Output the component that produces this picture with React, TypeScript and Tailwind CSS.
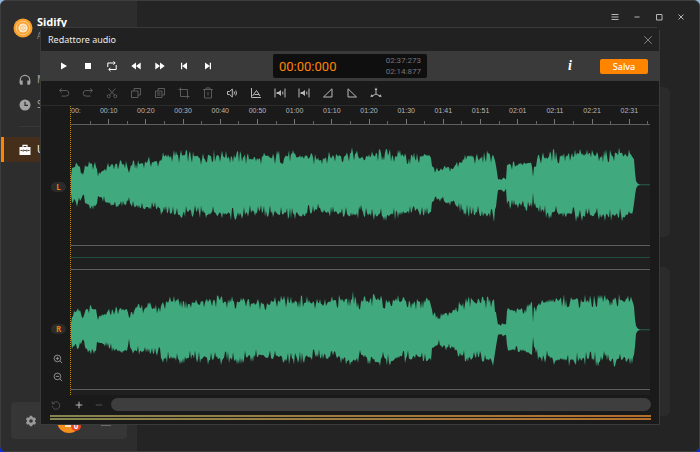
import React from "react";
import type { ReactNode } from "react";

type Key = [number, number];

const LENGTH = 579;

/* Loudness envelope of the track: position, height above the centre line */
const envelope: Key[] = [
  [0, 10], [1, 18], [5, 22], [9, 19], [12, 11], [14, 21], [20, 23], [25, 22], [27, 12], [31, 15],
  [37, 20], [46, 23], [56, 23], [58, 13], [60, 22], [68, 24], [78, 26], [88, 24], [91, 30], [100, 31],
  [106, 33], [112, 32], [125, 30], [138, 32], [150, 32], [170, 32], [185, 29], [205, 31], [230, 32],
  [248, 28], [262, 31], [282, 35], [290, 30], [305, 33], [320, 33], [335, 32], [345, 29], [357, 34],
  [360, 32], [361, 20], [368, 15], [375, 19], [383, 19], [385, 24], [391, 28], [400, 32], [408, 29],
  [423, 34], [425, 20], [427, 6], [430, 5], [433, 8], [435, 5], [436, 22], [450, 23], [461, 25],
  [462, 8], [463, 24], [470, 30], [480, 32], [505, 34], [530, 33], [550, 34], [561, 31], [563, 27],
  [565, 4], [567, 1], [569, 0],
];

function level(x: number): number {
  for (let i = 1; i < envelope.length; i++) {
    const [x0, y0] = envelope[i - 1];
    const [x1, y1] = envelope[i];
    if (x <= x1) return y0 + ((x - x0) / (x1 - x0)) * (y1 - y0);
  }
  return 0;
}

function noise(n: number, seed: number): number {
  const v = Math.sin(n * 12.9898 + seed * 78.233) * 43758.5453;
  return v - Math.floor(v);
}

function edge(seed: number, sign: number): string[] {
  const points: string[] = [];
  for (let x = 0; x <= 569; x++) {
    const fine = noise(x, seed);
    const wide = noise(Math.floor(x / 5), seed + 7);
    const spike = fine > 0.88 ? 0.08 : 0;
    const dip = fine < 0.16 ? 0.12 : 0;
    const factor = 0.76 + wide * 0.08 + fine * 0.2 + spike - dip;
    points.push(`${x},${(60 + sign * level(x) * factor).toFixed(1)}`);
  }
  return points;
}

function Wave({ seed, label }: { seed: number; label: string }) {
  const points = [...edge(seed, -1), ...edge(seed + 3, 1).reverse()].join(" ");
  return (
    <svg
      role="img"
      aria-label={label}
      viewBox={`0 0 ${LENGTH} 120`}
      preserveAspectRatio="none"
      className="block h-full w-full"
    >
      <path d="M560 60H579" stroke="#24604a" strokeWidth="1" />
      <polygon points={points} fill="#41a97e" />
    </svg>
  );
}

function Icon({ children, size = "size-3", width = 1 }: { children: ReactNode; size?: string; width?: number }) {
  return (
    <svg
      viewBox="0 0 12 12"
      fill="none"
      stroke="currentColor"
      strokeWidth={width}
      className={`${size} shrink-0`}
      aria-hidden="true"
    >
      {children}
    </svg>
  );
}

type Tool = { name: string; icon: ReactNode; off?: boolean };

const solid = { fill: "currentColor", stroke: "none" };

const mute = (
  <>
    <path d="M1 1.5v9M11 1.5v9M8.800 4.500v3" />
    <path {...solid} d="M2.600 5h1.800L7 3v6L4.400 7H2.600Z" />
  </>
);

const transport: Tool[] = [
  { name: "Riproduci", icon: <path {...solid} d="M3 2.5 9 6 3 9.5Z" /> },
  { name: "Ferma", icon: <path {...solid} d="M3 3h6v6H3Z" /> },
  { name: "Ripeti", icon: <path d="M1.800 7V3H9M10.200 5v4.500H3M7.500 1.300 9.200 3 7.500 4.700M4.500 7.800 2.800 9.500l1.700 1.700" /> },
  { name: "Indietro", icon: <path {...solid} d="M6 2.500v7L1.300 6ZM10.700 2.500v7L6 6Z" /> },
  { name: "Avanti", icon: <path {...solid} d="M6 2.500v7L10.700 6ZM1.300 2.500v7L6 6Z" /> },
  { name: "Inizio", icon: <path {...solid} d="M3 2.800h1.200v6.400H3ZM9 2.500v7L4.200 6Z" /> },
  { name: "Fine", icon: <path {...solid} d="M7.800 2.800H9v6.400H7.800ZM3 2.500v7L7.800 6Z" /> },
];

const editing: Tool[] = [
  { name: "Annulla", off: true, icon: <path d="M3.8 1.5 1.5 3.5l2.3 2M1.8 3.5H8a2.7 2.7 0 0 1 0 5.6H3.5" /> },
  { name: "Ripristina", off: true, icon: <path d="m8.2 1.5 2.3 2-2.3 2M10.2 3.5H4a2.7 2.7 0 0 0 0 5.6h4.5" /> },
  {
    name: "Taglia",
    off: true,
    icon: (
      <>
        <path d="m2.5 1.5 6 6.6M9.5 1.5l-6 6.6" />
        <circle cx="2.7" cy="9.2" r="1.5" />
        <circle cx="9.3" cy="9.2" r="1.5" />
      </>
    ),
  },
  { name: "Copia", off: true, icon: <path d="M4 4V1.5h6.5V8H8M1.5 4H8v6.5H1.5Z" /> },
  { name: "Incolla", off: true, icon: <path d="M4 4V1.5h6.5V8H8M1.5 4H8v6.5H1.5ZM3 6h3.5M3 8h3.5" /> },
  { name: "Ritaglia", off: true, icon: <path d="M2.500.5v9h9M.5 2.500h9v9" /> },
  { name: "Elimina", off: true, icon: <path d="M1 2.500h10M4 2.500V1h4v1.500M2.500 2.500v8.500h7V2.500M6 5v3.500" /> },
  { name: "Volume", icon: <path d="M1.500 4.500H3.500L6.300 2v8L3.500 7.500h-2ZM8 4.500q1 1.500 0 3M9.700 3.500q1.600 2.500 0 5" /> },
  { name: "Inviluppo", icon: <path d="M1.500 1v9.500H11M2.500 9 6.500 3.500 10 9M4.500 7.500h4.500" /> },
  { name: "Silenzia", icon: mute },
  { name: "Inserisci silenzio", icon: mute },
  { name: "Dissolvenza in entrata", icon: <path d="M1.500 10 10 1.800V10Z" /> },
  { name: "Dissolvenza in uscita", icon: <path d="M10.500 10 2 1.800V10Z" /> },
  {
    name: "Dividi",
    icon: (
      <>
        <path d="M6 2v5L2 9M6 7l4 2" />
        <path {...solid} d="M6 .5 7.500 3h-3ZM.3 9.800l1.200-2.600L3.300 10ZM11.700 9.800l-1.200-2.600L8.700 10Z" />
      </>
    ),
  },
];

const times = [
  "00:10", "00:20", "00:30", "00:40", "00:50", "01:00", "01:10", "01:20",
  "01:30", "01:41", "01:51", "02:01", "02:11", "02:21", "02:31",
];

function ToolButton({ tool }: { tool: Tool }) {
  return (
    <button
      type="button"
      aria-label={tool.name}
      disabled={tool.off}
      className="flex h-6 w-6 items-center justify-center disabled:text-[#5a5a5a]"
    >
      <Icon>{tool.icon}</Icon>
    </button>
  );
}

function Channel({ name }: { name: string }) {
  return (
    <span className="flex h-2.5 w-[15px] items-center justify-center rounded-full bg-[#2b2b2b] text-[8px] leading-none font-bold text-[#f07c05]">
      {name}
    </span>
  );
}

function Zoom({ name, plus }: { name: string; plus?: boolean }) {
  return (
    <button type="button" aria-label={name} className="flex h-[18px] w-4 items-center justify-center text-[#a0a0a0]">
      <Icon size="size-2.5">
        <circle cx="5.300" cy="5.300" r="4" />
        <path d={plus ? "M8.300 8.300 11 11M3.300 5.300h4M5.300 3.300v4" : "M8.300 8.300 11 11M3.300 5.300h4"} />
      </Icon>
    </button>
  );
}

function Sidebar() {
  const item = "flex h-[25px] items-center gap-1.5 border-l-3 pl-[15px] text-[10px]";
  return (
    <aside className="flex w-[136px] shrink-0 flex-col bg-[#2d2d2d] text-[#a3a3a3]">
      <div className="flex h-[66px] gap-1 pt-[13px] pl-3">
        <svg viewBox="0 0 20 20" className="mt-1 size-5" role="img" aria-label="Logo Sidify">
          <circle cx="10" cy="10" r="9.500" fill="#f9a02f" />
          <circle cx="10" cy="10" r="6.800" fill="none" stroke="#ffd08a" strokeWidth=".9" />
          <circle cx="10" cy="10" r="4.600" fill="#ffe9c9" />
          <circle cx="10" cy="10" r="2.800" fill="#fbc27a" />
          <path d="M8.500 9v2M10 8v4M11.500 9v2" stroke="#fff" strokeWidth=".7" />
        </svg>
        <div>
          <div className="text-[11px] leading-4 font-bold text-white">Sidify</div>
          <div className="text-[8px] leading-3 text-[#888]">A</div>
        </div>
      </div>
      <nav className="flex flex-col">
        <a href="#m" className={`${item} border-transparent`}>
          <svg viewBox="0 0 12 12" className="size-3" fill="none" aria-hidden="true">
            <path d="M1.300 9V6a4.700 4.700 0 0 1 9.400 0v3" stroke="currentColor" strokeWidth="1.200" />
            <path d="M.7 6.500h3v4.300H2A1.300 1.300 0 0 1 .7 9.500ZM11.300 6.500h-3v4.300H10a1.300 1.300 0 0 0 1.300-1.300Z" fill="currentColor" />
          </svg>
          M
        </a>
        <a href="#s" className={`${item} border-transparent`}>
          <svg viewBox="0 0 12 12" className="size-3" aria-hidden="true">
            <circle cx="6" cy="6" r="5.500" fill="currentColor" />
            <path d="M6 2.800v3.500h3" fill="none" stroke="#2d2d2d" strokeWidth="1.200" />
          </svg>
          S
        </a>
        <hr className="mx-[18px] mt-[9px] mb-2.5 border-[#383838]" />
        <a href="#u" aria-current="page" className={`${item} border-[#ff8400] bg-[#452f1a] text-white`}>
          <svg viewBox="0 0 12 12" className="size-3" aria-hidden="true">
            <path d="M4 3V1.300h4V3" fill="none" stroke="currentColor" strokeWidth="1.200" />
            <path d="M.5 3h11v8H.5Z" fill="currentColor" />
            <path d="M1.500 6.500h2M5 6.500h2M8.500 6.500h2M4.200 5.500v2.200M7.800 5.500v2.200" stroke="#452f1a" strokeWidth=".9" />
          </svg>
          U
        </a>
      </nav>
      <div className="mx-2.5 mt-auto mb-3 flex h-[37px] items-center rounded-sm bg-[#363636] pl-3.5">
        <button type="button" aria-label="Impostazioni" className="size-3 text-[#9a9a9a]">
          <svg viewBox="0 0 12 12" className="size-3" aria-hidden="true">
            <path d="M6 .8v10.400M1.500 3.400l9 5.200M10.500 3.400l-9 5.200" stroke="currentColor" strokeWidth="2.600" />
            <circle cx="6" cy="6" r="4.200" fill="currentColor" />
            <circle cx="6" cy="6" r="1.800" fill="#363636" />
          </svg>
        </button>
        <div className="relative ml-5 size-6 rounded-full bg-[#f78f1e]">
          <span className="mx-auto mt-4 block h-0.5 w-2 bg-[#ffe0b8]" />
          <span className="absolute top-3 left-[14px] flex size-2.5 items-center justify-center rounded-full bg-[#e8451c] text-[8px] leading-none font-bold text-white">
            0
          </span>
        </div>
        <span className="mt-2 ml-5 h-0.5 w-2.5 bg-[#6b6b6b]" />
      </div>
    </aside>
  );
}

function WindowControls() {
  const shapes: Tool[] = [
    { name: "Menu", icon: <path d="M2.500 3.500h7M2.500 6h7M2.500 8.500h7" /> },
    { name: "Riduci", icon: <path d="M3.500 6h5" /> },
    { name: "Ingrandisci", icon: <path d="M3.500 3.500h5.500v5.500H3.500Z" /> },
    { name: "Chiudi", icon: <path d="m3.500 3.500 5 5M8.500 3.500l-5 5" /> },
  ];
  return (
    <div className="flex justify-end pt-[5px] pr-[7px] text-[#b5b5b5]">
      {shapes.map((s) => (
        <button key={s.name} type="button" aria-label={s.name} className="flex h-[22px] w-[22px] items-center justify-center">
          <Icon>{s.icon}</Icon>
        </button>
      ))}
    </div>
  );
}

function Editor() {
  return (
    <section
      aria-label="Redattore audio"
      className="flex min-h-0 min-w-0 flex-1 flex-col rounded-t-sm border border-[#3a3a3a] bg-[#1a1a1a] text-[#b8b8b8]"
    >
      <header className="flex h-[23px] items-center justify-between bg-[#212121] pr-[5px] pl-[7px]">
        <h1 className="text-[9px] text-[#ececec]">Redattore audio</h1>
        <button type="button" aria-label="Chiudi editor" className="text-[#9a9a9a]">
          <Icon width={0.8}>
            <path d="m2.300 2.300 7.400 7.400M9.700 2.300 2.300 9.700" />
          </Icon>
        </button>
      </header>

      <div className="grid h-[30px] grid-cols-[1fr_auto_1fr] items-center bg-[#3a3a3a] px-[11px] text-white">
        <div className="flex">
          {transport.map((t) => (
            <ToolButton key={t.name} tool={t} />
          ))}
        </div>
        <div className="flex h-6 w-[154px] items-center justify-between rounded-xs bg-[#0f0f0f] px-1.5 font-['Roboto',sans-serif]">
          <output className="text-[13px] leading-none text-[#ff8205]">00:00:000</output>
          <div className="text-[8px] leading-[11px] text-[#77737a]">
            <div>02:37:273</div>
            <div>02:14:877</div>
          </div>
        </div>
        <div className="flex items-center justify-end gap-6">
          <button
            type="button"
            aria-label="Informazioni"
            className="w-3 font-['Liberation_Serif',serif] text-[14px] leading-none font-bold italic"
          >
            i
          </button>
          <button type="button" className="h-[15px] w-12 rounded-xs bg-[#ff8400] text-[9px] leading-none font-medium">
            Salva
          </button>
        </div>
      </div>

      <div className="flex h-[25px] items-center border-b border-[#2b2b2b] pl-[11px]">
        {editing.map((t) => (
          <ToolButton key={t.name} tool={t} />
        ))}
      </div>

      <div className="flex min-h-0 flex-1 pr-[9px]">
        <div className="flex w-[29px] flex-col items-end pt-[76px] pr-1">
          <Channel name="L" />
          <div className="min-h-0 flex-1" />
          <Channel name="R" />
          <div className="flex flex-col pt-4 pb-[9px]">
            <Zoom name="Aumenta zoom" plus />
            <Zoom name="Riduci zoom" />
          </div>
        </div>
        <div className="flex min-w-0 flex-1 flex-col border-l border-dotted border-[#c08c0b] bg-[#1f1f1f]">
          <div className="flex h-[18px] overflow-hidden bg-[#1a1a1a] font-['Liberation_Sans',sans-serif] text-[7px] leading-[9px] text-[#b8b8b8]">
            <span className="w-0 grow-[50]">00:</span>
            {times.map((t) => (
              <div key={t} className="flex w-0 grow-[100] items-end">
                <span className="h-[3px] w-px bg-[#666]" />
                <div className="flex flex-1 flex-col items-center">
                  <span>{t}</span>
                  <span className="mt-1 h-[5px] w-px bg-[#777]" />
                </div>
              </div>
            ))}
            <span className="flex w-0 grow-[7] items-end">
              <span className="h-[3px] w-px bg-[#666]" />
            </span>
          </div>
          <div className="min-h-0 flex-1 border-y border-[#5e5e5e]">
            <Wave seed={1} label="Canale sinistro" />
          </div>
          <div className="flex h-[23px] items-center">
            <span className="h-px w-full bg-[#1f4d3d]" />
          </div>
          <div className="min-h-0 flex-1 border-y border-[#5e5e5e]">
            <Wave seed={5} label="Canale destro" />
          </div>
          <div className="h-[5px]" />
        </div>
      </div>

      <footer className="pr-2 pb-1 pl-[9px]">
        <div className="flex h-[19px] items-center pl-px">
          <button type="button" aria-label="Reimposta" disabled className="flex w-4 justify-start text-[#5a5a5a]">
            <Icon size="size-2.5">
              <path d="M1.500 1.500v3h3M2 4.500a4.500 4.500 0 1 1-.5 2.500" />
            </Icon>
          </button>
          <button type="button" aria-label="Ingrandisci forma d'onda" className="flex w-6 justify-center">
            <Icon size="size-2.5" width={1.2}>
              <path d="M2 6h8M6 2v8" />
            </Icon>
          </button>
          <button type="button" aria-label="Riduci forma d'onda" disabled className="mr-1 flex w-4 justify-center text-[#5a5a5a]">
            <Icon size="size-2.5">
              <path d="M2 6h8" />
            </Icon>
          </button>
          <div className="h-[13px] flex-1 rounded-full bg-[#3e3e3e]" />
        </div>
        <div className="mt-px flex h-[5px] flex-col gap-px">
          <div className="h-0.5 bg-linear-to-r from-[#85854f] to-[#b56f2b]" />
          <div className="h-0.5 bg-linear-to-r from-[#85854f] to-[#b56f2b]" />
        </div>
      </footer>
    </section>
  );
}

export default function App() {
  return (
    <div className="h-screen min-h-[400px] bg-linear-to-b from-[#8fb4d4] to-[#0b2bd8] font-['Noto_Sans','Open_Sans',sans-serif]">
      <div className="relative flex h-full overflow-hidden rounded-md border border-[#3d3d3d] bg-[#242424]">
        <Sidebar />
        <main className="flex min-w-0 flex-1 flex-col">
          <WindowControls />
          <div className="flex flex-1 flex-col gap-[30px] pt-[59px] pr-[29px] pb-[35px] pl-8">
            <div className="flex-1 rounded-md bg-[#2b2b2b]" />
            <div className="flex-1 rounded-md bg-[#2b2b2b]" />
          </div>
        </main>
        <div className="absolute inset-0 flex pt-[26px] pr-[39px] pb-[26px] pl-[39px]">
          <Editor />
        </div>
      </div>
    </div>
  );
}
